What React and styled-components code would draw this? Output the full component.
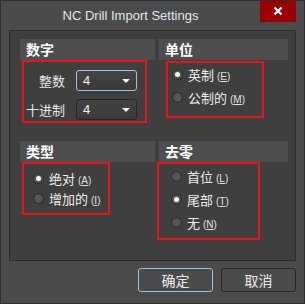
import React from 'react';
import styled, { createGlobalStyle } from 'styled-components';

const GlobalStyle = createGlobalStyle`
  html, body { margin: 0; padding: 0; background: #4b4b4b; }
  body { font-family: "Noto Sans CJK SC", "Liberation Sans", sans-serif; }
`;

const cjk = `"Noto Sans CJK SC", "Liberation Sans", sans-serif`;

const Window = styled.div`
  width: 305px;
  height: 304px;
  box-sizing: border-box;
  background: #4b4b4b;
  border: 1px solid #2f2f2f;
  display: flex;
  flex-direction: column;
  overflow: hidden;
`;

const TitleBar = styled.div`
  height: 29px;
  display: flex;
  align-items: flex-start;
`;

const Title = styled.div`
  flex: 1;
  height: 29px;
  line-height: 29px;
  text-align: center;
  font-family: "Liberation Sans", sans-serif;
  font-size: 13px;
  color: #dfe8ee;
`;

const CloseButton = styled.div`
  width: 36px;
  height: 22px;
  margin-right: 8px;
  margin-top: -1px;
  background: #9a0000;
  color: #fff;
  display: flex;
  align-items: center;
  justify-content: center;
`;

const Panel = styled.div`
  margin: 0 8px 0 8px;
  height: 231px;
  box-sizing: border-box;
  background: #3f3f3f;
  border: 1px solid #2c2c2c;
  padding: 8px 6px 0 10px;
  display: grid;
  grid-template-columns: 135px 129px;
  grid-template-rows: 96px auto;
  column-gap: 4px;
  row-gap: 6px;
  align-content: start;
`;

const Group = styled.div`
  display: flex;
  flex-direction: column;
`;

const GroupHeader = styled.div`
  height: 21px;
  background: #4e4e4e;
  color: #fff;
  font-family: ${cjk};
  font-weight: bold;
  font-size: 14px;
  line-height: 21px;
  padding-left: 6px;
`;

const Mark = styled.div`
  border: 2px solid #e8141c;
  align-self: flex-start;
  box-sizing: border-box;
  width: ${p => p.$w}px;
  margin-left: ${p => p.$left}px;
  margin-top: ${p => p.$top}px;
  padding: ${p => p.$pad};
  display: flex;
  flex-direction: column;
  gap: ${p => p.$gap || 0}px;
`;

const FieldRow = styled.div`
  display: flex;
  align-items: center;
  justify-content: flex-end;
  gap: 11px;
`;

const FieldLabel = styled.span`
  font-family: ${cjk};
  font-size: 13px;
  white-space: nowrap;
  color: #e6e6e6;
`;

const Combo = styled.div`
  flex: none;
  width: 61px;
  height: 21px;
  box-sizing: border-box;
  border-radius: 3px;
  border: 1px solid ${p => (p.$focus ? '#9dc3e3' : '#262626')};
  background: linear-gradient(#434343, #3a3a3a);
  display: flex;
  align-items: center;
  justify-content: space-between;
  padding: 0 6px 0 6px;
  font-family: "Liberation Sans", sans-serif;
  font-size: 13px;
  color: #f2f2f2;
`;

const Arrow = styled.span`
  width: 0;
  height: 0;
  border-left: 4px solid transparent;
  border-right: 4px solid transparent;
  border-top: 4px solid #f2f2f2;
`;

const RadioRow = styled.div`
  height: ${p => p.$h}px;
  display: flex;
  align-items: center;
  gap: 5px;
  white-space: nowrap;
`;

const RadioDot = styled.span`
  flex: none;
  width: 11px;
  height: 11px;
  box-sizing: border-box;
  border-radius: 50%;
  border: 1px solid #2b2b2b;
  background: radial-gradient(circle, #5a5a5a, #4c4c4c);
  display: flex;
  align-items: center;
  justify-content: center;
  &::after {
    content: '';
    display: ${p => (p.$on ? 'block' : 'none')};
    width: 5px;
    height: 5px;
    border-radius: 50%;
    background: #fff;
  }
`;

const RadioText = styled.span`
  font-family: ${cjk};
  font-size: 13px;
  color: #ececec;
`;

const Hotkey = styled.span`
  font-family: "Liberation Sans", sans-serif;
  font-size: 10px;
  color: #e0e0e0;
  margin-left: 3px;
  u { text-decoration: underline; }
`;

const Footer = styled.div`
  flex: 1;
  display: flex;
  justify-content: flex-end;
  align-items: flex-start;
  gap: 8px;
  padding: 7px 8px 0 0;
`;

const Button = styled.div`
  width: 75px;
  height: 24px;
  box-sizing: border-box;
  border-radius: 3px;
  border: 1px solid ${p => (p.$focus ? '#9dc3e3' : '#272727')};
  background: #4b4b4b;
  display: flex;
  align-items: center;
  justify-content: center;
  font-family: ${cjk};
  font-size: 14px;
  color: #eaeaea;
`;

const Radio = ({ on, label, hot, h }) => (
  <RadioRow $h={h}>
    <RadioDot $on={on} />
    <RadioText>
      {label}
      <Hotkey>(<u>{hot}</u>)</Hotkey>
    </RadioText>
  </RadioRow>
);

export default function App() {
  return (
    <>
      <GlobalStyle />
      <Window>
        <TitleBar>
          <Title>NC Drill Import Settings</Title>
          <CloseButton>
            <svg width="10" height="10" viewBox="0 0 10 10">
              <path d="M1.5 1.5 L8.5 8.5 M8.5 1.5 L1.5 8.5" stroke="#fff" strokeWidth="2.2" />
            </svg>
          </CloseButton>
        </TitleBar>
        <Panel>
          <Group>
            <GroupHeader>数字</GroupHeader>
            <Mark $w={125} $left={2} $top={0} $pad="8px 8px 1px 2px" $gap={8}>
              <FieldRow>
                <FieldLabel>整数</FieldLabel>
                <Combo $focus>4<Arrow /></Combo>
              </FieldRow>
              <FieldRow>
                <FieldLabel>十进制</FieldLabel>
                <Combo>4<Arrow /></Combo>
              </FieldRow>
            </Mark>
          </Group>
          <Group>
            <GroupHeader>单位</GroupHeader>
            <Mark $w={98} $left={7} $top={1} $pad="0 0 7px 4px">
              <Radio on label="英制" hot="E" h={23} />
              <Radio label="公制的" hot="M" h={23} />
            </Mark>
          </Group>
          <Group>
            <GroupHeader>类型</GroupHeader>
            <Mark $w={88} $left={2} $top={0} $pad="4px 0 5px 9px">
              <Radio on label="绝对" hot="A" h={20} />
              <Radio label="增加的" hot="I" h={20} />
            </Mark>
          </Group>
          <Group>
            <GroupHeader>去零</GroupHeader>
            <Mark $w={103} $left={-2} $top={0} $pad="1px 0 4px 12px">
              <Radio label="首位" hot="L" h={23} />
              <Radio on label="尾部" hot="T" h={23} />
              <Radio label="无" hot="N" h={23} />
            </Mark>
          </Group>
        </Panel>
        <Footer>
          <Button $focus>确定</Button>
          <Button>取消</Button>
        </Footer>
      </Window>
    </>
  );
}
